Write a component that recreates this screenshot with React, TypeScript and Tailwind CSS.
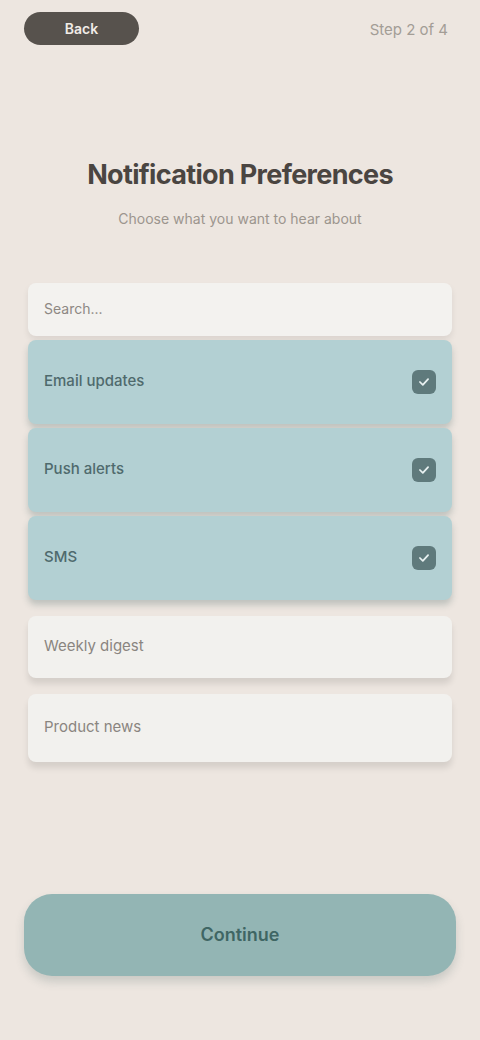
import React from 'react';

const rows = [
  { label: 'Email updates', active: true },
  { label: 'Push alerts', active: true },
  { label: 'SMS', active: true },
  { label: 'Weekly digest', active: false },
  { label: 'Product news', active: false },
];

const Check = () => (
  <span className="flex h-6 w-6 items-center justify-center rounded-md bg-[#5f7a7c]">
    <svg width="14" height="14" viewBox="0 0 24 24" fill="none" stroke="#e8f1f1" strokeWidth="3" strokeLinecap="round" strokeLinejoin="round">
      <path d="M5 12l5 5L19 7" />
    </svg>
  </span>
);

const App = () => {
  return (
    <div className="min-h-[1040px] w-[480px] bg-[#ede6e0] font-['Inter',sans-serif] text-[#3c3834] flex flex-col">
      <div className="flex items-center justify-between px-6 pt-3">
        <button className="flex h-[33px] w-[115px] items-center justify-center rounded-full bg-[#57524d] text-sm font-semibold text-[#f1ece7]">
          Back
        </button>
        <span className="pr-2 pt-1 text-[15px] text-[#a39d96]">Step 2 of 4</span>
      </div>

      <div className="mt-[110px] flex flex-col items-center">
        <h1 className="text-[27px] font-bold tracking-tight text-[#4a4541]">Notification Preferences</h1>
        <p className="mt-3 text-[14px] text-[#9c958e]">Choose what you want to hear about</p>
      </div>

      <div className="mt-[54px] flex flex-col gap-1 px-7">
        <div className="flex h-[53px] items-start rounded-lg bg-[#f3f2ef] px-4 pt-4 shadow-[0_4px_6px_rgba(0,0,0,0.08)]">
          <span className="text-sm text-[#8d8883]">Search...</span>
        </div>
        {rows.map((r, i) =>
          r.active ? (
            <div
              key={i}
              className="flex h-[84px] items-center justify-between rounded-lg bg-[#b3d0d3] px-4 shadow-[0_5px_6px_rgba(60,90,90,0.25)]"
            >
              <span className="text-[15px] font-medium text-[#4f6a6d]">{r.label}</span>
              <Check />
            </div>
          ) : (
            <div
              key={i}
              className={`flex items-center rounded-lg bg-[#f2f1ee] px-4 shadow-[0_6px_6px_rgba(0,0,0,0.1)] ${i === 3 ? 'mt-3 h-[62px]' : 'mt-3 h-[68px]'}`}
            >
              <span className="text-[15px] text-[#8a8580]">{r.label}</span>
            </div>
          )
        )}
      </div>

      <div className="mt-[132px] px-6">
        <button className="flex h-[82px] w-full items-center justify-center rounded-[28px] bg-[#93b5b4] text-lg font-semibold text-[#3f6664] shadow-[0_6px_10px_rgba(60,90,90,0.2)]">
          Continue
        </button>
      </div>
    </div>
  );
};

export default App;
